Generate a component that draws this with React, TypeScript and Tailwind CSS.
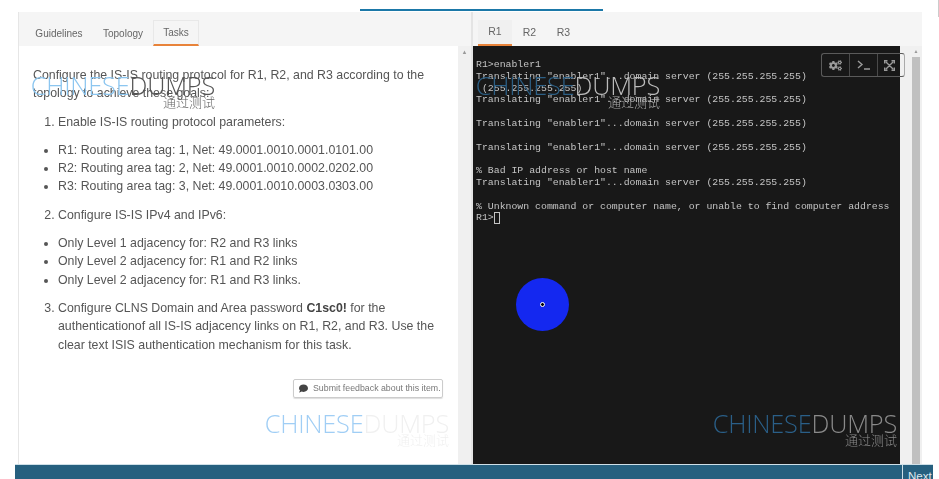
import { FaCogs, FaComment } from 'react-icons/fa'

const Watermark = ({ className, blue, gray, cjk }: { className: string; blue: string; gray: string; cjk: string }) => {
  return (
    <div className={`pointer-events-none absolute flex w-[184px] flex-col items-end blur-[0.3px] ${className}`}>
      <div className="font-['Open_Sans',sans-serif] text-[25.3px] leading-[26px] font-light tracking-[-0.2px] whitespace-nowrap">
        <span className={blue}>CHINESE</span>
        <span className={gray}>DUMPS</span>
      </div>
      <div className={`-mt-[3px] font-['Noto_Sans_CJK_SC',sans-serif] text-[13px] leading-[14px] font-light ${cjk}`}>通过测试</div>
    </div>
  )
}

const terminal = `R1>enabler1
Translating "enabler1"...domain server (255.255.255.255)
 (255.255.255.255)
Translating "enabler1"...domain server (255.255.255.255)

Translating "enabler1"...domain server (255.255.255.255)

Translating "enabler1"...domain server (255.255.255.255)

% Bad IP address or host name
Translating "enabler1"...domain server (255.255.255.255)

% Unknown command or computer name, or unable to find computer address
R1>`

export default function App() {
  return (
    <div className="relative flex h-[479px] w-[939px] flex-col overflow-hidden bg-white font-['Liberation_Sans',sans-serif]">
      <div className="ml-[360px] mt-[9px] h-[2px] w-[243px] shrink-0 bg-[#1b78a8]" />

      {/* main panels */}
      <div className="ml-[18px] mt-[1px] flex h-[452px] w-[904px] shrink-0 border-l border-[#e6e6e6] bg-[#f5f5f5] blur-[0.5px]">
        <div className="flex w-[452px] flex-col">
          <div className="flex h-[34px] shrink-0 items-end text-[10px] text-[#666]">
            <div className="flex h-[26px] w-[80px] items-center justify-center">Guidelines</div>
            <div className="flex h-[26px] w-[54px] items-center justify-center pr-[6px]">Topology</div>
            <div className="flex h-[26px] w-[46px] items-center justify-center border-x border-t border-[#e8e8e8] border-b-2 border-b-[#e8833a]">
              Tasks
            </div>
          </div>
          <div className="flex min-h-0 flex-1">
            <div className="w-[439px] bg-white pl-[14px] pr-[20px] pt-[20px] text-[12.35px] leading-[18.3px] text-[#555]">
              <p className="mb-[10px]">
                Configure the IS-IS routing protocol for R1, R2, and R3 according to the topology to achieve these goals:
              </p>
              <ol className="list-decimal pl-[25px]">
                <li className="mb-[10px]">Enable IS-IS routing protocol parameters:</li>
                <ul className="mb-[10px] list-disc">
                  <li>R1: Routing area tag: 1, Net: 49.0001.0010.0001.0101.00</li>
                  <li>R2: Routing area tag: 2, Net: 49.0001.0010.0002.0202.00</li>
                  <li>R3: Routing area tag: 3, Net: 49.0001.0010.0003.0303.00</li>
                </ul>
                <li className="mb-[10px]">Configure IS-IS IPv4 and IPv6:</li>
                <ul className="mb-[10px] list-disc">
                  <li>Only Level 1 adjacency for: R2 and R3 links</li>
                  <li>Only Level 2 adjacency for: R1 and R2 links</li>
                  <li>Only Level 2 adjacency for: R1 and R3 links.</li>
                </ul>
                <li>
                  Configure CLNS Domain and Area password <b className="text-[#444]">C1sc0!</b> for the authenticationof
                  all IS-IS adjacency links on R1, R2, and R3. Use the clear text ISIS authentication mechanism for this
                  task.
                </li>
              </ol>
              <div className="mt-[25px] flex justify-end">
                <div className="-mr-[5px] flex h-[19px] w-[150px] items-center gap-[5px] rounded-[2px] border border-[#ccc] pl-[5px] text-[8.8px] text-[#777] shadow-[0_1px_1px_#ddd]">
                  <FaComment className="text-[9px] text-[#444]" />
                  <span className="whitespace-nowrap">Submit feedback about this item.</span>
                </div>
              </div>
            </div>
            <div className="flex-1 bg-[#f0f0f0] pt-[3px] text-center text-[6px] leading-[6px] text-[#999]">▲</div>
          </div>
        </div>
        <div className="w-[2px] bg-[#e4e4e4]" />
        <div className="flex min-w-0 flex-1 flex-col">
          <div className="flex h-[34px] shrink-0 items-end pl-[5px] text-[10.5px] text-[#666]">
            <div className="flex h-[26px] w-[34px] items-center justify-center border-b-2 border-b-[#e8833a] bg-[#f0f0f0]">R1</div>
            <div className="flex h-[26px] w-[35px] items-center justify-center">R2</div>
            <div className="flex h-[26px] w-[33px] items-center justify-center">R3</div>
          </div>
          <div className="flex min-h-0 flex-1">
            <div className="w-[427px] bg-[#181818] pl-[3px] pt-[13px]">
              <pre className="font-['Liberation_Mono',monospace] text-[9.85px] leading-[11.8px] text-[#c4c4c4]">
                {terminal}
                <span className="inline-block h-[11.8px] w-[6px] align-top border border-[#c4c4c4]" />
              </pre>
            </div>
            <div className="flex flex-1 justify-end bg-[#f0f0f0] pr-[2px]">
              <div className="flex w-[8px] flex-col text-center text-[5px] leading-[11px] text-[#999]">
                <span>▲</span>
                <div className="flex-1 bg-[#c0c0c0]" />
              </div>
            </div>
          </div>
        </div>
      </div>

      {/* footer */}
      <div className="ml-[15px] flex h-[15px] w-[918px] shrink-0 justify-end overflow-hidden border-t border-[#cfe0e8] bg-[#26607f]">
        <div className="w-[31px] border-l border-[#cfe0e8] pl-[5px] pt-[4px] text-[11.5px] leading-[14px] text-[#dfe8ee]">Next</div>
      </div>

      {/* terminal toolbar */}
      <div className="absolute left-[821px] top-[53px] flex h-[24px] w-[84px] rounded-[3px] border border-[#5a5a5a] border-r-[#aaa] text-[#9a9a9a]">
        <div className="flex w-[28px] items-center justify-center border-r border-[#4a4a4a]">
          <FaCogs className="text-[13px]" />
        </div>
        <div className="flex w-[28px] items-center justify-center border-r border-[#4a4a4a]">
          <svg width="13" height="10" viewBox="0 0 13 10" fill="none" stroke="currentColor" strokeWidth="1.4">
            <path d="M1 1l4 3.5L1 8M7 9h6" />
          </svg>
        </div>
        <div className="flex flex-1 items-center justify-center pr-[3px]">
          <svg width="11" height="11" viewBox="0 0 11 11" fill="none" stroke="currentColor" strokeWidth="1.4">
            <path d="M2 2l7 7M9 2L2 9M.7 3.5V.7h2.8M7.5.7h2.8v2.8M.7 7.5v2.8h2.8M10.3 7.5v2.8H7.5" />
          </svg>
        </div>
      </div>

      {/* recording cursor */}
      <div className="absolute left-[516px] top-[278px] flex h-[53px] w-[53px] items-center justify-center rounded-full bg-[#1428f0]">
        <div className="h-[5px] w-[5px] rounded-full border border-white bg-black" />
      </div>

      <div className="absolute left-[938px] top-0 h-[17px] w-[8px] border border-[#ccc]" />

      <Watermark className="left-[31px] top-[72px]" blue="text-[#8cc6f0]" gray="text-[#555]" cjk="text-[#666]" />
      <Watermark className="left-[476px] top-[72px]" blue="text-[#2c5f85]" gray="text-[#bbb]" cjk="text-[#aaa]" />
      <Watermark className="left-[265px] top-[410px]" blue="text-[#a0cef5]" gray="text-[#f0f0f0]" cjk="text-[#f0f0f0]" />
      <Watermark className="left-[713px] top-[410px]" blue="text-[#2a5f88]" gray="text-[#8a8a8a]" cjk="text-[#8a8a8a]" />
    </div>
  )
}
